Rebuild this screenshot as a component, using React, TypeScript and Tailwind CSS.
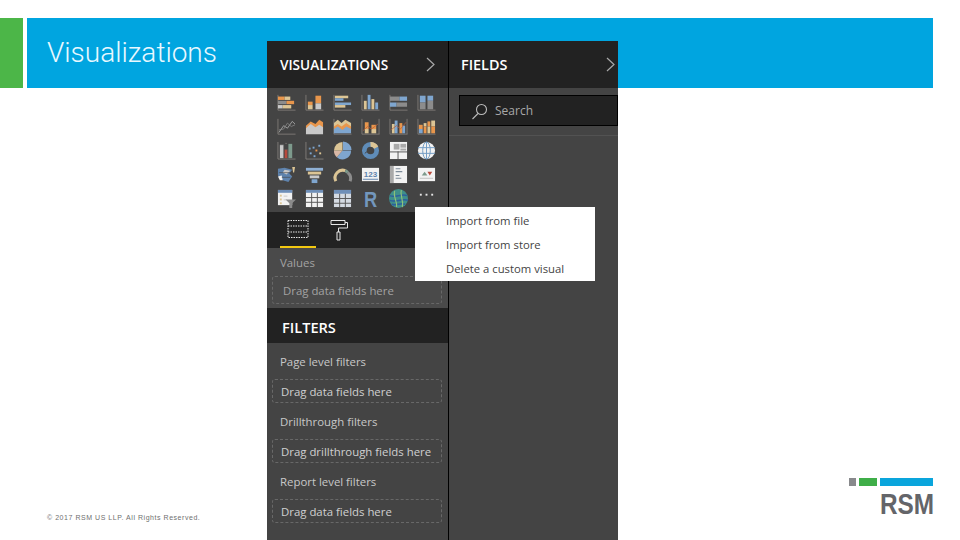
import React from "react";

const O = "#e8964c";
const T = "#dcc595";
const B = "#7fa6cf";
const G = "#8c8c8c";
const L = "#c9c9c9";
const A = "#8f8a84";
const W = "#f2f2f2";

// small bar helper: x, y, w, h, fill
const R = ({ c }: { c: [number, number, number, number, string][] }) => (
  <>
    {c.map(([x, y, w, h, f], i) => (
      <rect key={i} x={x} y={y} width={w} height={h} fill={f} />
    ))}
  </>
);

// axis shared by the chart icons
const Axis = ({ right }: { right?: boolean }) => (
  <path d={right ? "M1 1V19H19.5M19 1V19" : "M1 1V19H19.5"} stroke={A} strokeWidth="0.8" fill="none" />
);

const icons: React.ReactNode[] = [
  // stacked bar
  <><Axis /><R c={[[1, 3, 7, 4, O], [8, 3, 6, 4, T], [1, 8, 9, 4, G], [10, 8, 8, 4, O], [1, 13, 5, 4, L], [6, 13, 9, 4, T]]} /></>,
  // stacked column
  <><Axis /><R c={[[3, 9, 5, 4, O], [3, 13, 5, 5, T], [11, 2, 6, 9, O], [11, 11, 6, 7, L]]} /></>,
  // clustered bar
  <><Axis /><R c={[[2, 2, 14, 3, T], [2, 5, 9, 3, B], [2, 10, 17, 3, B], [2, 13, 11, 3, T]]} /></>,
  // clustered column
  <><Axis /><R c={[[3, 8, 3, 10, T], [7, 1, 3, 17, B], [11, 6, 3, 12, T], [15, 10, 3, 8, B]]} /></>,
  // 100% bar
  <><Axis /><R c={[[1, 3, 10, 5, G], [11, 3, 8, 5, B], [1, 10, 7, 5, B], [8, 10, 11, 5, G]]} /></>,
  // 100% column
  <><Axis /><R c={[[3, 2, 6, 8, B], [3, 10, 6, 8, G], [11, 2, 6, 6, B], [11, 8, 6, 10, G]]} /></>,
  // line
  <><Axis /><path d="M2 17L7 9L11 12L16 4L19 7" stroke="#b9b9b9" strokeWidth="0.8" fill="none" /><path d="M2 14L7 13L11 6L15 10L19 8" stroke="#8d8d8d" strokeWidth="0.8" fill="none" /></>,
  // area
  <><path d="M1 9L6 4L11 7L15 2L19 5V12H1Z" fill={O} /><path d="M1 12L6 7L11 11L15 8L19 11V19H1Z" fill={L} /></>,
  // stacked area
  <><Axis /><path d="M1 6L5 2L9 6L13 2L19 6V11H1Z" fill={T} /><path d="M1 10L5 7L9 10L14 6L19 10V14H1Z" fill={O} /><path d="M1 13L5 10L10 14L14 10L19 13V18H1Z" fill={B} /></>,
  // line and stacked column
  <><Axis right /><R c={[[4, 5, 4, 8, O], [4, 13, 4, 5, T], [11, 8, 5, 5, O], [11, 13, 5, 5, T]]} /><path d="M2 15L7 10L11 13L18 7" stroke="#b55d3c" strokeWidth="0.8" fill="none" /></>,
  // line and clustered column
  <><Axis right /><R c={[[3, 7, 3, 11, T], [6, 3, 3, 15, B], [11, 6, 3, 12, O], [14, 9, 3, 9, B]]} /><path d="M2 14L8 9L12 13L18 5" stroke="#b55d3c" strokeWidth="0.8" fill="none" /></>,
  // ribbon
  <><Axis /><R c={[[2, 8, 4, 5, O], [2, 13, 4, 5, B], [7, 6, 3, 4, T], [7, 10, 3, 8, O], [11, 4, 3, 6, O], [11, 10, 3, 8, T], [15, 3, 4, 7, T], [15, 10, 4, 8, O]]} /></>,
  // waterfall
  <><Axis /><R c={[[3, 4, 4, 14, L], [9, 2, 1, 1, A], [8, 9, 3, 9, "#b84a3c"], [12, 3, 4, 15, "#7d9a8c"]]} /><path d="M3 4H7V18M8 9H11V18" stroke="#5a5a5a" strokeWidth="0.5" fill="none" /></>,
  // scatter
  <><Axis /><R c={[[5, 12, 2, 2, B], [8, 6, 2, 2, B], [11, 9, 2, 2, O], [15, 12, 2, 2, T], [14, 4, 2, 2, B], [4, 7, 2, 2, "#6f8fb0"], [9, 15, 2, 2, B]]} /></>,
  // pie
  <><path d="M10 10L10 1A9 9 0 0 1 19 10Z" fill={B} transform="translate(0.5 -0.5)" /><path d="M10 10L19 10A9 9 0 0 1 4 17Z" fill={B} /><path d="M10 10L4 17A9 9 0 0 1 1 10Z" fill="#d9b8a6" /><path d="M10 10L1 10A9 9 0 0 1 10 1Z" fill={T} /></>,
  // donut
  <><circle cx="10" cy="10" r="6.5" fill="none" stroke="#5f8cb8" strokeWidth="5" /><path d="M10 3.5A6.5 6.5 0 0 1 16 7" fill="none" stroke={T} strokeWidth="5" /><path d="M4 13L6.5 11" stroke="#444" strokeWidth="1" /></>,
  // treemap
  <><rect x="1" y="1" width="18" height="18" fill={W} /><R c={[[5, 3, 6, 6, "#a9a9a9"], [12, 3, 6, 4, "#a9a9a9"], [12, 8, 6, 2, "#a9a9a9"], [1, 11, 18, 1, "#555"], [9, 11, 1, 8, "#555"]]} /></>,
  // map
  <><circle cx="10" cy="10" r="9" fill={W} /><ellipse cx="10" cy="10" rx="4" ry="9" fill="none" stroke="#6f9ac2" strokeWidth="1" /><path d="M1 7H19M1 13H19M10 1V19" stroke="#6f9ac2" strokeWidth="1" /></>,
  // filled map
  <><path d="M1 4L8 3L16 5L13 9L16 12L12 18L6 16L1 11Z" fill="#5f83ad" /><path d="M16 2H19L18 8H17Z" fill={T} /><path d="M8 5L14 6L10 10L6 8Z" fill={L} /><path d="M1 12L5 11L6 16L3 16Z" fill={W} /><path d="M2 8H14M5 13H14" stroke="#444" strokeWidth="0.6" /></>,
  // funnel
  <><R c={[[1, 3, 18, 3, "#8fb0d4"], [3, 7, 14, 3, T], [5, 11, 10, 3, L], [7, 15, 6, 4, B]]} /></>,
  // gauge
  <><path d="M3 17A8 8 0 0 1 13 6" fill="none" stroke={T} strokeWidth="3.2" /><path d="M13 6A8 8 0 0 1 15.5 8" fill="none" stroke="#7d9a8c" strokeWidth="3.2" /><path d="M15.5 8A8 8 0 0 1 18 17" fill="none" stroke={G} strokeWidth="3.2" /></>,
  // card
  <><rect x="1" y="3" width="18" height="14" fill={W} /><text x="10" y="12.5" textAnchor="middle" fontSize="8.5" fontWeight="700" fill="#5f83ad" fontFamily="'Liberation Sans', sans-serif">123</text><path d="M2 15H18" stroke="#5f83ad" strokeWidth="1" /></>,
  // multi row card
  <><rect x="1" y="1" width="18" height="18" fill={W} /><rect x="1" y="1" width="4" height="18" fill="#a9a9a9" /><path d="M7 4H12M7 7H14M7 11H11M7 14H13" stroke="#7d8b99" strokeWidth="1.2" /></>,
  // kpi
  <><rect x="1" y="3" width="18" height="14" fill={W} /><path d="M5 11L8 7L11 11Z" fill="#7d9a8c" /><path d="M11 7H16L13.5 11Z" fill="#b84a3c" /><path d="M3 14H17" stroke="#c0c0c0" strokeWidth="1" /></>,
  // slicer
  <><rect x="1" y="1" width="15" height="16" fill={W} /><rect x="1" y="1" width="15" height="3" fill="#6f8fb8" /><R c={[[3, 6, 2, 2, T], [3, 10, 2, 2, T], [3, 14, 2, 2, T], [7, 7, 4, 1, L], [7, 11, 3, 1, L]]} /><path d="M9 11H20L16 15V20H13V15Z" fill="#8a8a8a" /></>,
  // table
  <><rect x="1" y="1" width="18" height="18" fill={W} /><rect x="1" y="1" width="18" height="3" fill="#6f8fb8" /><path d="M7 4V19M13 4V19M1 9H19M1 14H19" stroke="#555" strokeWidth="1" /></>,
  // matrix
  <><rect x="1" y="1" width="18" height="18" fill="#d5dbe3" /><rect x="1" y="1" width="18" height="4" fill="#6f8fb8" /><path d="M7 5V19M13 5V19M1 10H19M1 15H19" stroke="#555" strokeWidth="1" /></>,
  // R
  <text x="12.5" y="18.5" textAnchor="middle" fontSize="24" fontWeight="700" fill="#7397bd" fontFamily="'Liberation Sans', sans-serif" transform="scale(0.8 1)">R</text>,
  // arcgis globe
  <><circle cx="10" cy="10" r="10" fill="#3f8f8a" /><path d="M1 7C6 10 14 4 19 7M1 12C7 15 13 9 20 12M3 16C8 18 12 14 17 16" stroke="#2e5f9e" strokeWidth="1.6" fill="none" /><path d="M6 2C4 8 9 13 8 19M13 1C11 7 16 12 14 19" stroke="#8fc27a" strokeWidth="1.2" fill="none" /></>,
  // more
  <R c={[[3, 5, 2, 2, "#e6e6e6"], [9, 5, 2, 2, "#e6e6e6"], [15, 5, 2, 2, "#e6e6e6"]]} />,
];

const Chevron = () => (
  <svg width="9" height="15" viewBox="0 0 9 15" fill="none" stroke="#a8a8a8" strokeWidth="1.2">
    <path d="M1 1L8 7.5L1 14" />
  </svg>
);

const DropZone = ({ text, dim }: { text: string; dim?: boolean }) => (
  <div className={`ml-[5px] mr-[6px] flex items-center rounded-[3px] border border-dashed border-[#686868] pt-[1px] ${dim ? "h-[28px] pl-[10px] text-[#a3a3a3]" : "h-[24px] pl-[8px] text-[#d0d0d0]"}`}>
    {text}
  </div>
);

export default function App() {
  return (
    <div className="relative flex h-[540px] w-[960px] flex-col overflow-hidden bg-white font-['Liberation_Sans',sans-serif]">
      <div className="mt-[18px] flex h-[70px] gap-[4px] pr-[27px]">
        <div className="w-[23px] bg-[#4cb648]" />
        <div className="flex-1 bg-[#00a5e0] pl-[20px] pt-[17px] font-['Roboto',sans-serif] text-[28px] leading-[36px] font-light text-[#e8f8ff]">
          Visualizations
        </div>
      </div>

      <div className="mt-auto flex items-end justify-between pb-[18px] pl-[47px] pr-[27px]">
        <div className="mb-[-1px] text-[7px] leading-[10px] tracking-[0.54px] text-[#6f6f6f]">
          © 2017 RSM US LLP. All Rights Reserved.
        </div>
        <div className="mb-[6px] flex w-[84px] flex-col">
          <div className="flex h-[8px] gap-[3px]">
            <div className="w-[7px] bg-[#88898c]" />
            <div className="w-[18px] bg-[#3fae49]" />
            <div className="flex-1 bg-[#0aa5dc]" />
          </div>
          <div className="mt-[5px] h-[25px] origin-left translate-x-[31px] scale-x-[0.84] text-[29px] leading-[26px] font-bold text-[#646569]">
            RSM
          </div>
        </div>
      </div>

      {/* power bi pane, sits over the slide */}
      <div className="absolute left-[267px] top-[41px] flex h-[499px] w-[351px] bg-[#444444] font-['Open_Sans',sans-serif] text-[11.4px] leading-[16px]">
        <div className="flex w-[182px] flex-col border-r border-black">
          <div className="flex h-[47px] shrink-0 items-center justify-between bg-[#222222] pl-[13px] pr-[13px] text-[13.6px] font-semibold text-white">
            VISUALIZATIONS
            <Chevron />
          </div>
          <div className="grid h-[124px] shrink-0 grid-cols-[repeat(6,28px)] grid-rows-[repeat(5,24px)] content-start pl-[5px] pt-[2px]">
            {icons.map((icon, i) => (
              <div key={i} className="flex items-center justify-center">
                {/* first two rows are flatter than the others */}
                <svg className="overflow-visible" width="19" height={i < 12 ? 17 : 19} viewBox="0 0 20 20" preserveAspectRatio="none">{icon}</svg>
              </div>
            ))}
          </div>
          <div className="flex h-[36px] shrink-0 bg-[#222222] pl-[13px]">
            <div className="flex w-[36px] items-center justify-center border-b-2 border-[#f2c811]">
              <svg width="22" height="20" viewBox="0 0 22 20" fill="none" stroke="#e8e8e8" strokeWidth="1" strokeDasharray="1.5 1">
                <path d="M1 1.5H21V18.5H1ZM1 7H21M1 13H21" />
              </svg>
            </div>
            <div className="flex w-[46px] items-center justify-center">
              <svg width="20" height="22" viewBox="0 0 20 22" fill="none" stroke="#e8e8e8" strokeWidth="1">
                <path d="M2 1.5H16V5.5H2ZM16 3.5H18.5V9H9.5V13M8 13H11V21H8Z" />
              </svg>
            </div>
          </div>
          <div className="h-[60px] shrink-0 bg-[#4a4a4a] pt-[7px] text-[#a3a3a3]">
            <div className="mb-[5px] h-[16px] pl-[13px]">Values</div>
            <DropZone text="Drag data fields here" dim />
          </div>
          <div className="flex h-[35px] shrink-0 items-center bg-[#222222] pl-[15px] pt-[3px] text-[14.6px] font-semibold text-white">
            FILTERS
          </div>
          <div className="flex flex-col text-[#c8c8c8]">
            <div className="mt-[11px] mb-[9px] h-[16px] pl-[13px]">Page level filters</div>
            <DropZone text="Drag data fields here" />
            <div className="mt-[11px] mb-[9px] h-[16px] pl-[13px]">Drillthrough filters</div>
            <DropZone text="Drag drillthrough fields here" />
            <div className="mt-[11px] mb-[9px] h-[16px] pl-[13px]">Report level filters</div>
            <DropZone text="Drag data fields here" />
          </div>
        </div>
        <div className="flex-1">
          <div className="flex h-[47px] items-center justify-between bg-[#222222] pl-[12px] pr-[3px] text-[14.4px] font-semibold text-white">
            FIELDS
            <Chevron />
          </div>
          <div className="h-[48px] border-b border-[#525252] pl-[10px] pt-[7px]">
            <div className="flex h-[31px] items-center border border-black bg-[#222222] pl-[11px] pt-[1px] text-[12px] text-[#a8a8a8]">
              <svg width="17" height="17" viewBox="0 0 17 17" fill="none" stroke="#bcbcbc" strokeWidth="1.1">
                <circle cx="10.5" cy="6.5" r="5" />
                <path d="M7 10.5L1.5 16" />
              </svg>
              <span className="ml-[7px]">Search</span>
            </div>
          </div>
        </div>
      </div>

      {/* context menu */}
      <div className="absolute left-[415px] top-[207px] flex h-[74px] w-[180px] flex-col justify-center gap-[8px] bg-white pl-[31px] pt-[2px] font-['Open_Sans',sans-serif] text-[11.3px] leading-[16px] text-[#444444]">
        <div>Import from file</div>
        <div>Import from store</div>
        <div>Delete a custom visual</div>
      </div>
    </div>
  );
}
